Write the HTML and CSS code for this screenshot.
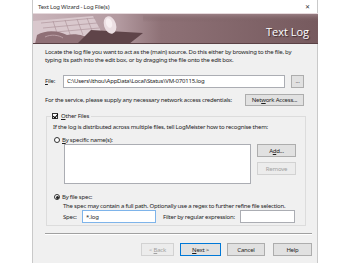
FILE: index.html
```html
<!DOCTYPE html>
<html lang="en">
<head>
    <meta charset="UTF-8">
    <title>Text Log Wizard - Log File(s)</title>
    <link rel="stylesheet" href="styles.css">
</head>
<body>
    <div class="window">
        <div class="titlebar">
            <span class="title">Text Log Wizard - Log File(s)</span>
            <span class="close">&#x2715;</span>
        </div>
        <div class="banner">
            <svg class="banner-art" width="285" height="31" viewBox="0 0 285 31">
                <defs>
                    <linearGradient id="bg" x1="0" y1="0" x2="1" y2="0">
                        <stop offset="0" stop-color="#c9b4ba"/>
                        <stop offset="0.3" stop-color="#b39aa0"/>
                        <stop offset="0.45" stop-color="#8e7176"/>
                        <stop offset="1" stop-color="#765a5e"/>
                    </linearGradient>
                    <linearGradient id="band" x1="0" y1="0" x2="0" y2="1">
                        <stop offset="0" stop-color="#a58b90" stop-opacity="0.9"/>
                        <stop offset="1" stop-color="#765a5e" stop-opacity="0"/>
                    </linearGradient>
                </defs>
                <rect width="285" height="31" fill="url(#bg)"/>
                <rect x="110" y="0" width="175" height="9" fill="url(#band)"/>
                <rect x="0" y="0" width="285" height="1" fill="#e6dadd"/>
                <!-- keyboard -->
                <polygon points="0,8 60,3 70,22 6,31 0,31" fill="#d9c8cd"/>
                <g stroke="#a98f95" stroke-width="0.6">
                    <line x1="8" y1="10" x2="62" y2="5"/>
                    <line x1="10" y1="15" x2="64" y2="10"/>
                    <line x1="12" y1="20" x2="66" y2="15"/>
                    <line x1="20" y1="8" x2="26" y2="26"/>
                    <line x1="32" y1="7" x2="38" y2="24"/>
                    <line x1="44" y1="6" x2="50" y2="22"/>
                    <line x1="54" y1="5" x2="60" y2="20"/>
                </g>
                <!-- hands -->
                <path d="M4,22 C14,16 26,18 34,22 C42,20 52,22 58,27 L58,31 L2,31 Z" fill="#8f7076"/>
                <path d="M12,24 C18,21 26,22 30,25" stroke="#b99ea4" stroke-width="1" fill="none"/>
                <!-- dark sleeve -->
                <polygon points="44,31 58,17 110,20 96,31" fill="#5f4449"/>
                <!-- mouse -->
                <ellipse cx="77" cy="12" rx="6" ry="9" fill="#ecdfe3" transform="rotate(-18 77 12)"/>
                <ellipse cx="76" cy="10" rx="3" ry="5" fill="#f8f0f2" transform="rotate(-18 76 10)"/>
                <rect x="0" y="30" width="285" height="1" fill="#5a4145"/>
            </svg>
            <span class="banner-title">Text Log</span>
        </div>
        <div class="content">
            <p class="intro">Locate the log file you want to act as the (main) source. Do this either by browsing to the file, by typing its path into the edit box, or by dragging the file onto the edit box.</p>
            <div class="file-row">
                <label class="file-label"><u>F</u>ile:</label>
                <input class="edit file-edit" type="text" value="C:\Users\lthou\AppData\Local\Status\VM-070115.log">
                <button class="btn browse">...</button>
            </div>
            <div class="service-row">
                <span>For the service, please supply any necessary network access credentials:</span>
                <button class="btn network">Net<u>w</u>ork Access...</button>
            </div>
            <fieldset class="group">
                <legend><span class="check checked"></span><u>O</u>ther Files</legend>
                <p class="hint">If the log is distributed across multiple files, tell LogMeister how to recognise them:</p>
                <div class="option"><span class="radio"></span><span><u>B</u>y specific name(s):</span></div>
                <div class="names-row">
                    <div class="listbox"></div>
                    <div class="side-buttons">
                        <button class="btn side">A<u>d</u>d...</button>
                        <button class="btn side" disabled>Remove</button>
                    </div>
                </div>
                <div class="option spec-option"><span class="radio on"></span><span>By file spec:</span></div>
                <p class="hint spec-hint">The spec may contain a full path. Optionally use a regex to further refine file selection.</p>
                <div class="spec-row">
                    <label>Spec:</label>
                    <input class="edit spec-edit" type="text" value="*.log">
                    <label class="filter-label">Filter by regular expression:</label>
                    <input class="edit filter-edit" type="text" value="">
                </div>
            </fieldset>
        </div>
        <div class="separator"></div>
        <div class="footer">
            <button class="btn nav" disabled>&lt; <u>B</u>ack</button>
            <button class="btn nav default"><u>N</u>ext &gt;</button>
            <button class="btn nav cancel">Cancel</button>
            <button class="btn nav help">Help</button>
        </div>
    </div>
</body>
</html>
```

FILE: styles.css
```css
* {
    margin: 0;
    padding: 0;
    box-sizing: border-box;
}
body {
    background: #fff;
    font-family: "Noto Sans", sans-serif;
    font-size: 6px;
    letter-spacing: -0.22px;
    color: #1e1e1e;
}
u {
    text-decoration: underline;
    text-underline-offset: 1px;
}
.window {
    margin-left: 32px;
    width: 286px;
    height: 263px;
    background: #f0f0f0;
    border-left: 1px solid #c9c9c9;
    border-right: 1px solid #c9c9c9;
}
.titlebar {
    height: 13px;
    background: #fff;
    display: flex;
    align-items: center;
    justify-content: space-between;
    padding: 0 7px 0 5px;
}
.title {
    font-size: 6px;
    color: #333;
}
.close {
    font-size: 6px;
    color: #333;
}
.banner {
    position: relative;
    height: 31px;
}
.banner-art {
    display: block;
}
.banner-title {
    position: absolute;
    right: 8px;
    top: 12px;
    font-family: "Open Sans", sans-serif;
    font-size: 11px;
    line-height: 13px;
    letter-spacing: 0;
    color: #fff;
    text-shadow: 1px 1px 1px #3a2629;
}
.content {
    padding: 4px 13px 0 12px;
}
.intro {
    line-height: 8px;
    height: 26px;
}
.file-row {
    display: flex;
    align-items: center;
    height: 14px;
}
.file-label {
    width: 18px;
}
.edit {
    height: 13px;
    border: 1px solid #abadb3;
    background: #fff;
    font-family: "Noto Sans", sans-serif;
    font-size: 6px;
    letter-spacing: -0.22px;
    color: #1e1e1e;
    padding: 0 3px;
    outline: none;
}
.file-edit {
    width: 222px;
}
.btn {
    background: #e1e1e1;
    border: 1px solid #adadad;
    font-family: "Noto Sans", sans-serif;
    font-size: 6px;
    letter-spacing: -0.22px;
    color: #1e1e1e;
    height: 13px;
}
.btn:disabled {
    background: #ececec;
    border-color: #d2d2d2;
    color: #a0a0a0;
}
.browse {
    width: 13px;
    margin-left: 6px;
    color: #555;
}
.service-row {
    display: flex;
    align-items: center;
    justify-content: space-between;
    margin-top: 5px;
    height: 13px;
}
.network {
    width: 59px;
    height: 12px;
}
.group {
    margin: 6px 0 0 1px;
    width: 260px;
    height: 114px;
    border: 1px solid #dcdcdc;
    padding: 0 6px 0 6px;
}
.group legend {
    display: flex;
    align-items: center;
    padding: 0 2px 0 1px;
    margin-left: -2px;
    line-height: 8px;
}
.check {
    width: 6px;
    height: 6px;
    border: 1px solid #333;
    background: #fff;
    margin-right: 3px;
    position: relative;
}
.check.checked::after {
    content: "";
    position: absolute;
    left: 1px;
    top: -1px;
    width: 2px;
    height: 4px;
    border: solid #000;
    border-width: 0 1px 1px 0;
    transform: rotate(40deg);
}
.hint {
    line-height: 8px;
    margin-top: 3px;
}
.option {
    display: flex;
    align-items: center;
    margin-top: 5px;
    line-height: 8px;
    margin-left: 1px;
}
.radio {
    width: 6px;
    height: 6px;
    border: 1px solid #333;
    border-radius: 50%;
    background: #fff;
    margin-right: 2px;
    display: flex;
    align-items: center;
    justify-content: center;
}
.radio.on::after {
    content: "";
    width: 3px;
    height: 3px;
    border-radius: 50%;
    background: #222;
}
.names-row {
    display: flex;
    margin-top: 0;
    margin-left: 11px;
}
.listbox {
    width: 187px;
    height: 40px;
    background: #fff;
    border: 1px solid #abadb3;
}
.side-buttons {
    display: flex;
    flex-direction: column;
    gap: 5px;
    margin-left: 6px;
}
.side {
    width: 39px;
}
.spec-option {
    margin-top: 9px;
}
.spec-hint {
    margin-left: 10px;
    margin-top: 1px;
}
.spec-row {
    display: flex;
    align-items: center;
    margin-left: 10px;
    margin-top: 0;
}
.spec-row label {
    width: 19px;
}
.spec-edit {
    width: 74px;
    border-color: #7eb4ea;
}
.spec-row .filter-label {
    width: auto;
    margin-left: 7px;
    margin-right: 5px;
}
.filter-edit {
    width: 55px;
}
.separator {
    margin: 7px 5px 0 12px;
    border-top: 1px solid #a0a0a0;
    border-bottom: 1px solid #fff;
}
.footer {
    display: flex;
    justify-content: flex-end;
    gap: 6px;
    padding: 8px 5px 0 0;
}
.nav {
    width: 33px;
    height: 13px;
}
.nav.default {
    border-color: #0078d7;
    width: 41px;
}
.nav.cancel {
    width: 38px;
    margin-right: 2px;
}
.nav.help {
    width: 39px;
}
```
